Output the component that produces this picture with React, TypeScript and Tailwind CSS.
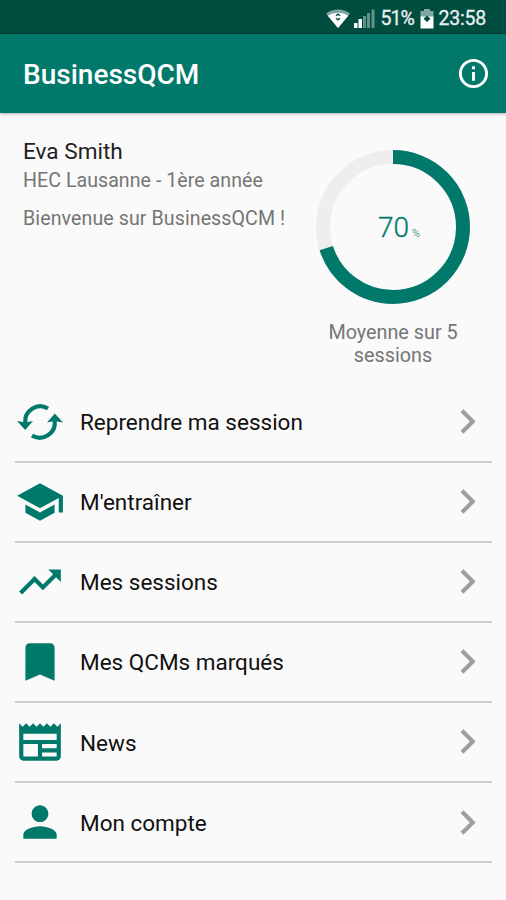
import React from 'react';
import {
  MdBookmark,
  MdChevronRight,
  MdInfoOutline,
  MdNewspaper,
  MdPerson,
  MdSchool,
  MdTrendingUp,
} from 'react-icons/md';

interface IconProps {
  size?: number;
  className?: string;
}

interface MenuEntry {
  label: string;
  icon: React.ComponentType<IconProps>;
}

function ResumeIcon({ size = 24, className }: IconProps) {
  return (
    <svg className={className} width={size} height={size} viewBox="0 0 50 50" fill="none">
      <path d="M33 11.500A15 15 0 0 0 10.300 26M17 38.500A15 15 0 0 0 39.700 24" stroke="currentColor" strokeWidth="4.200" />
      <path d="M2 24l6 1h5l5-1-7.800 9zM48 25.500l-6-1h-5l-5 1 7.800-9z" fill="currentColor" />
    </svg>
  );
}

const menu: MenuEntry[] = [
  { label: 'Reprendre ma session', icon: ResumeIcon },
  { label: "M'entraîner", icon: MdSchool },
  { label: 'Mes sessions', icon: MdTrendingUp },
  { label: 'Mes QCMs marqués', icon: MdBookmark },
  { label: 'News', icon: MdNewspaper },
  { label: 'Mon compte', icon: MdPerson },
];

function StatusBar() {
  return (
    <div className="flex h-[34px] items-center justify-end border-b border-[#003e33] bg-[#004d40] pr-5 pt-[4px] text-[19px] text-[#e8efed]">
      <svg className="mr-1" width="24" height="20" viewBox="0 0 24 20">
        <path d="M0 4.500C7-.9 17-.9 24 4.500L12 19z" fill="#7fa69f" />
        <path d="M1.800 6.700C8 2.700 16 2.700 22.200 6.700L12 19z" fill="#fff" />
        <path d="M10 6.800 12 5.200l2 1.600M10 9.200l2 1.600 2-1.600" fill="none" stroke="#004d40" strokeWidth="1.300" />
      </svg>
      <svg className="mr-[5px]" width="21" height="20" viewBox="0 0 21 20">
        <path d="M0 14h3.500v5H0zM4.500 10H8v9H4.500z" fill="#fff" />
        <path d="M9 7h3v12H9zM13 4h3v15h-3zM17.500.5h3V19h-3z" fill="#5f9389" />
      </svg>
      <span className="w-[35px] whitespace-nowrap text-[19.5px] tracking-[-0.9px] [-webkit-text-stroke:0.3px]">51%</span>
      <svg className="ml-[5px] mr-[4px]" width="14" height="20" viewBox="0 0 14 20">
        <path d="M4 0h6v2h3.500v6H.5V2H4z" fill="#7fa69f" />
        <path d="M.5 7.500h13v12H.5z" fill="#fff" />
        <path d="M7 6.500l3.500 3.200L7 13 3.500 9.700z" fill="#004d40" />
      </svg>
      <span className="text-[19.5px] tracking-[-0.2px] [-webkit-text-stroke:0.3px]">23:58</span>
    </div>
  );
}

function ScoreRing({ value }: { value: number }) {
  const radius = 70;
  const length = 2 * Math.PI * radius;

  return (
    <div className="relative h-[154px] w-[154px]">
      <svg width="154" height="154" viewBox="0 0 154 154">
        <circle cx="77" cy="77" r={radius} fill="none" stroke="#eeeeee" strokeWidth="14" />
        <circle
          cx="77"
          cy="77"
          r={radius}
          fill="none"
          stroke="#00796b"
          strokeWidth="14"
          strokeDasharray={`${(length * value) / 100} ${length}`}
          transform="rotate(-90 77 77)"
        />
      </svg>
      <div className="absolute inset-0 flex items-baseline justify-center pl-[12px] pt-[58px] text-[#00796b]">
        <span className="text-[28px] leading-[40px] font-light [-webkit-text-stroke:0.3px]">{value}</span>
        <span className="ml-[3px] text-[11px] font-light">%</span>
      </div>
    </div>
  );
}

export default function App() {
  return (
    <div className="h-[900px] w-[506px] overflow-hidden bg-[#fafafa] font-['Roboto',sans-serif]">
      <StatusBar />
      <header className="flex h-[79px] items-center justify-between bg-[#00796b] pl-[23px] pr-[15px] text-white shadow-[0_1px_3px_rgba(0,0,0,0.3)]">
        <h1 className="pt-[3px] text-[28px] font-medium">BusinessQCM</h1>
        <MdInfoOutline size={35} />
      </header>

      <section className="flex h-[269.5px] justify-between pl-[23px] pr-[36px]">
        <div className="pt-[24px] text-[#757575]">
          <p className="text-[22.6px] leading-[30px] text-[#212121]">Eva Smith</p>
          <p className="text-[19.6px] leading-[28px] tracking-[0.04px]">HEC Lausanne - 1ère année</p>
          <p className="mt-[10px] text-[19.6px] leading-[28px] tracking-[0.09px]">Bienvenue sur BusinessQCM !</p>
        </div>
        <div className="w-[154px] pt-[37px]">
          <ScoreRing value={70} />
          <p className="mt-[17px] text-center text-[19.8px] leading-[23px] text-[#757575]">
            Moyenne sur 5 sessions
          </p>
        </div>
      </section>

      <ul className="ml-[15px] mr-[14px]">
        {menu.map(({ label, icon: Icon }) => (
          <li key={label} className="flex h-[80.1px] items-center border-b-2 border-[#cccccc]">
            <Icon size={50} className="shrink-0 text-[#00796b]" />
            <span className="ml-[15px] flex-1 pt-[3px] text-[22.5px] text-[#111111]">{label}</span>
            <MdChevronRight size={49} className="shrink-0 text-[#9e9e9e]" />
          </li>
        ))}
      </ul>
    </div>
  );
}
